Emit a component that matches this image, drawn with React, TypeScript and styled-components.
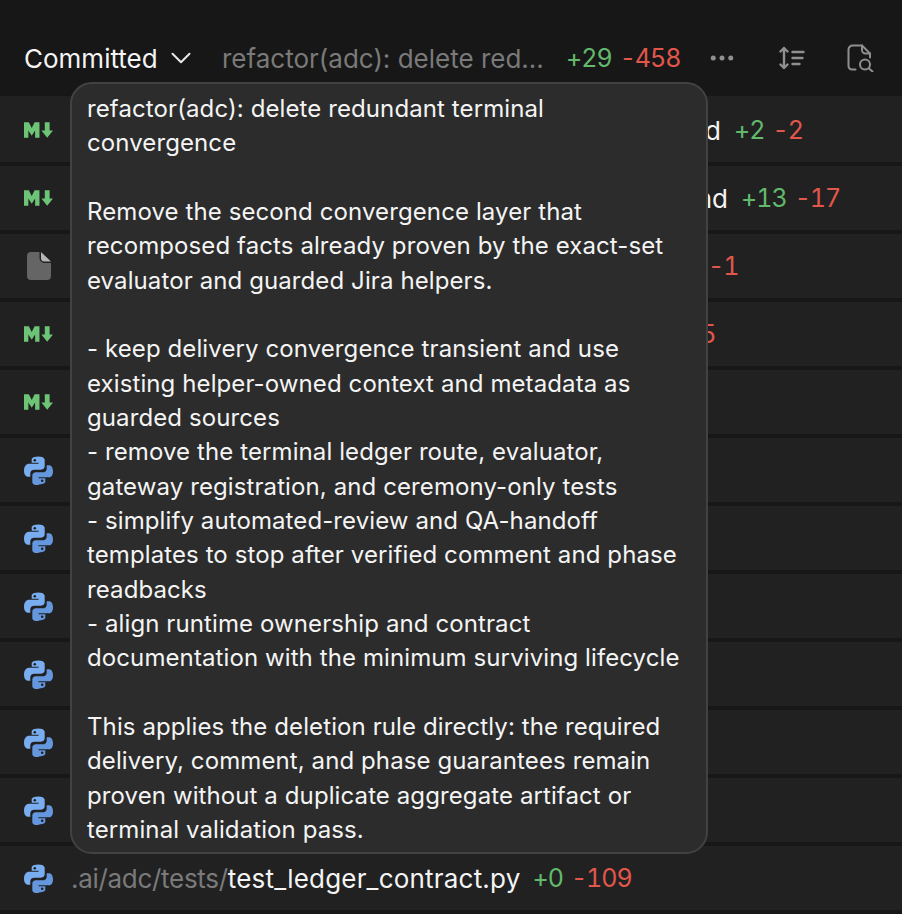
import React, { FC } from 'react'
import styled, { createGlobalStyle } from 'styled-components'
import { ChevronDown, Ellipsis } from 'lucide-react'

const GlobalStyle = createGlobalStyle`
  html, body {
    margin: 0;
    padding: 0;
    background: #171717;
  }
  body {
    font-family: Inter, 'Liberation Sans', sans-serif;
    -webkit-font-smoothing: antialiased;
  }
`

type IconKind = 'md' | 'file' | 'py'

type Change = {
  icon: IconKind
  name?: string
  nameWidth: number
  added?: string
  removed?: string
}

const changes: Change[] = [
  { icon: 'md', name: 'd', nameWidth: 650, added: '+2', removed: '-2' },
  { icon: 'md', name: 'nd', nameWidth: 657, added: '+13', removed: '-17' },
  { icon: 'file', nameWidth: 624, removed: '-1' },
  { icon: 'md', nameWidth: 601, removed: '-5' },
  { icon: 'md', nameWidth: 0 },
  { icon: 'py', nameWidth: 0 },
  { icon: 'py', nameWidth: 0 },
  { icon: 'py', nameWidth: 0 },
  { icon: 'py', nameWidth: 0 },
  { icon: 'py', nameWidth: 0 },
  { icon: 'py', nameWidth: 0 },
]

const message = `refactor(adc): delete redundant terminal
convergence

Remove the second convergence layer that
recomposed facts already proven by the exact-set
evaluator and guarded Jira helpers.

- keep delivery convergence transient and use
existing helper-owned context and metadata as
guarded sources
- remove the terminal ledger route, evaluator,
gateway registration, and ceremony-only tests
- simplify automated-review and QA-handoff
templates to stop after verified comment and phase
readbacks
- align runtime ownership and contract
documentation with the minimum surviving lifecycle

This applies the deletion rule directly: the required
delivery, comment, and phase guarantees remain
proven without a duplicate aggregate artifact or
terminal validation pass.`

const MarkdownIcon: FC = () => (
  <svg width="30" height="16" viewBox="0 0 30 16" fill="#6dc477">
    <path d="M0 0h5l3 6 3-6h5v16h-4.500V8.500L8 14 4.500 8.500V16H0z" />
    <path d="M21.500 0h5v8.500H30L24 16l-6-7.500h3.500z" />
  </svg>
)

const PlainFileIcon: FC = () => (
  <svg width="24" height="28" viewBox="0 0 24 28">
    <path
      d="M4 0h8.500v6a5 5 0 0 0 5 5H24v13a4 4 0 0 1-4 4H4a4 4 0 0 1-4-4V4a4 4 0 0 1 4-4z"
      fill="#656565"
    />
    <path d="M14 0 24 9.500h-6.500A3.500 3.500 0 0 1 14 6z" fill="#b5b5b5" />
  </svg>
)

const PythonIcon: FC = () => (
  <svg width="29" height="29" viewBox="0 0 29 29">
    <path
      d="M14.3 0.5c-7 0-6.600 3-6.600 3v3.200h6.900v1H4.500S0 8.200 0 14.600c0 6.500 3.900 6.200 3.900 6.200h2.400v-3.200s-.1-3.900 3.900-3.900h6.800s3.700.1 3.700-3.600V4.300s.6-3.800-6.400-3.800z"
      fill="#79adf0"
    />
    <path
      d="M14.700 28.500c7 0 6.600-3 6.600-3v-3.200h-6.900v-1h10.100s4.500.5 4.500-5.900c0-6.500-3.900-6.200-3.900-6.200h-2.400v3.200s.1 3.900-3.900 3.900h-6.800s-3.700-.1-3.700 3.600v5.800s-.6 3.800 6.400 3.800z"
      fill="#6497de"
    />
    <circle cx="10.800" cy="4.300" r="1.250" fill="#1f1f1f" />
    <circle cx="18.200" cy="24.700" r="1.250" fill="#1f1f1f" />
  </svg>
)

const SortLinesIcon: FC = () => (
  <svg width="26" height="24" viewBox="0 0 26 24" fill="none" stroke="#8f8f8f" strokeWidth="2.400" strokeLinecap="round" strokeLinejoin="round">
    <path d="M5 2v20M1.500 5.500 5 2l3.500 3.500M1.500 18.500 5 22l3.500-3.500" />
    <path d="M13.500 6h11M13.500 12h10M13.500 18h7" />
  </svg>
)

const FileSearchIcon: FC = () => (
  <svg width="28" height="28" viewBox="0 0 28 28" fill="none" stroke="#8f8f8f" strokeWidth="2" strokeLinecap="round" strokeLinejoin="round">
    <path d="M8.500 25.500H5A3.500 3.500 0 0 1 1.500 22V5.500a4 4 0 0 1 4-4H15l8 8v4" />
    <path d="M15 1.500V6a3.500 3.500 0 0 0 3.500 3.500H23" />
    <circle cx="18" cy="20.500" r="5" />
    <path d="m22 24.500 3.500 3" />
  </svg>
)

const FileTypeIcon: FC<{ kind: IconKind }> = ({ kind }) => {
  if (kind === 'md') return <MarkdownIcon />
  if (kind === 'file') return <PlainFileIcon />
  return <PythonIcon />
}

const App: FC = () => (
  <Page>
    <GlobalStyle />
    <Toolbar>
      <ScopeButton>
        Committed
        <ChevronDown size={34} strokeWidth={1.4} color="#e8e8e8" />
      </ScopeButton>
      <CommitTitle>refactor(adc): delete red...</CommitTitle>
      <Counts>
        <Added>+29</Added>
        <Removed>-458</Removed>
      </Counts>
      <ToolIcons>
        <Ellipsis size={30} color="#8f8f8f" strokeWidth={2} />
        <SortLinesIcon />
        <FileSearchIcon />
      </ToolIcons>
    </Toolbar>
    <FileList>
      {changes.map((change, index) => (
        <FileRow key={index} $first={index === 0}>
          <IconSlot>
            <FileTypeIcon kind={change.icon} />
          </IconSlot>
          <FileName $width={change.nameWidth}>{change.name}</FileName>
          <Counts>
            {change.added && <Added>{change.added}</Added>}
            {change.removed && <Removed>{change.removed}</Removed>}
          </Counts>
        </FileRow>
      ))}
      <FileRow>
        <IconSlot>
          <PythonIcon />
        </IconSlot>
        <Path>
          <Dir>.ai/adc/tests/</Dir>test_ledger_contract.py
        </Path>
        <Counts>
          <Added>+0</Added>
          <Removed>-109</Removed>
        </Counts>
      </FileRow>
    </FileList>
    <Tooltip>{message}</Tooltip>
  </Page>
)

const Page = styled.div`
  position: relative;
  width: 902px;
  height: 914px;
  overflow: hidden;
  background: #171717;
  color: #f2f2f2;
  font-size: 26px;
`

const Toolbar = styled.div`
  display: flex;
  align-items: center;
  height: 96px;
  padding: 20px 24px 0;
  box-sizing: border-box;
`

const ScopeButton = styled.div`
  display: flex;
  align-items: center;
  flex: none;
  gap: 6px;
  color: #f4f4f4;
  width: 198px;
`

const CommitTitle = styled.div`
  flex: none;
  color: #7a7a7a;
  width: 344px;
`

const ToolIcons = styled.div`
  display: flex;
  align-items: center;
  flex: none;
  gap: 42px;
  margin-left: 27px;
`

const Counts = styled.div`
  display: flex;
  flex: none;
  gap: 8px;
  font-size: 25px;
  letter-spacing: -1px;
  font-variant-numeric: tabular-nums;
`

const Added = styled.span`
  color: #62b96b;
`

const Removed = styled.span`
  color: #e2574c;
`

const FileList = styled.div`
  display: flex;
  flex-direction: column;
  gap: 4px;
`

const FileRow = styled.div<{ $first?: boolean }>`
  display: flex;
  align-items: center;
  height: ${({ $first }) => ($first ? 66 : 64)}px;
  padding: ${({ $first }) => ($first ? '2px' : '0')} 0 0 24px;
  box-sizing: border-box;
  background: #212121;
`

const IconSlot = styled.div`
  display: flex;
  align-items: center;
  justify-content: center;
  width: 29px;
  margin-right: 18px;
`

const FileName = styled.div<{ $width: number }>`
  width: ${({ $width }) => $width}px;
  margin-right: 13px;
  text-align: right;
  color: #f4f4f4;
`

const Path = styled.div`
  color: #f4f4f4;
  letter-spacing: 0.2px;
  margin-right: 12px;
`

const Dir = styled.span`
  color: #7a7a7a;
  letter-spacing: -0.3px;
`

const Tooltip = styled.div`
  position: absolute;
  left: 70px;
  top: 82px;
  width: 638px;
  height: 772px;
  box-sizing: border-box;
  padding: 8px 15px;
  background: #2c2c2c;
  border: 2px solid #424242;
  border-radius: 22px;
  color: #f4f4f4;
  font-size: 24px;
  letter-spacing: 0.1px;
  line-height: 34.33px;
  white-space: pre-wrap;
`

export default App
